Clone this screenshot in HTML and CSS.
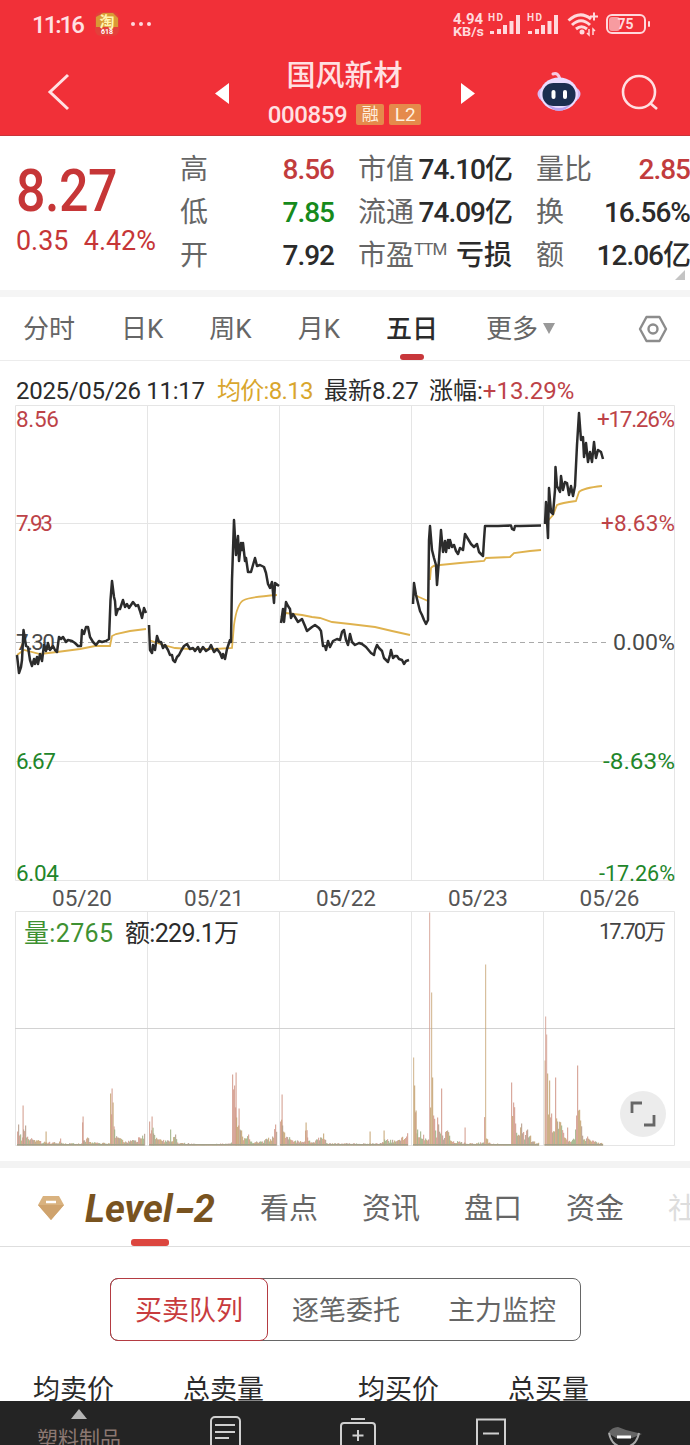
FILE: index.html
```html
<!DOCTYPE html>
<html lang="zh-CN">
<head>
  <meta charset="utf-8">
  <title>国风新材 000859</title>
  <link rel="stylesheet" href="styles.css">
</head>
<body>
  <header class="header">
    <div class="status">
      <span class="status-time">11:16</span>
      <svg class="status-app" width="24" height="24" viewBox="0 0 24 24">
        <rect width="24" height="24" rx="6" fill="#e3403b"/>
        <path d="M1 5L8 1h10l5 5v9H1z" fill="#d99a35"/>
        <text x="12" y="15" font-size="15" font-weight="700" text-anchor="middle" fill="#fff3b0">淘</text>
        <text x="12" y="22" font-size="7" font-weight="700" text-anchor="middle" fill="#fff">618</text>
      </svg>
      <span class="status-dots"><i></i><i></i><i></i></span>
      <svg class="status-icons" width="200" height="30" viewBox="452 9 200 30" fill="#ffd9dc">
        <g font-weight="700">
          <text x="453" y="24" font-size="14" textLength="30" lengthAdjust="spacingAndGlyphs">4.94</text>
          <text x="453" y="36" font-size="13" textLength="31" lengthAdjust="spacingAndGlyphs">KB/s</text>
        </g>
        <text x="488" y="21" font-size="10" textLength="15" font-weight="700">HD</text>
        <text x="527" y="21" font-size="10" textLength="15" font-weight="700">HD</text>
        <path d="M490 31h4v3h-4zM497 29h4v5h-4zM503 25h4v9h-4zM509.500 21h4v13h-4zM516 15h4v19h-4z"/>
        <path d="M528 31h4v3h-4zM535 29h4v5h-4zM541 25h4v9h-4zM547.500 21h4v13h-4zM554 15h4v19h-4z"/>
        <g fill="none" stroke="#ffd9dc" stroke-width="3">
          <path d="M568.500 20.500Q580 10 591 19"/>
          <path d="M572 25Q581 16.500 590 25"/>
          <path d="M576 29Q581.500 24.500 587 29"/>
          <path d="M594 12.500v8M590 16.500h8" stroke-width="2"/>
          <rect x="607" y="15" width="38" height="18" rx="5" stroke-width="2"/>
        </g>
        <circle cx="582" cy="32" r="2.500"/>
        <path d="M589 29v6l-2-2M593 35v-6l2 2" fill="none" stroke="#ffd9dc" stroke-width="1.500"/>
        <rect x="609" y="17" width="11" height="14" rx="3" fill="#f79ba0"/>
        <rect x="648" y="21" width="2" height="6" rx="1"/>
        <text x="617.500" y="29" font-size="14" font-weight="700" textLength="16">75</text>
      </svg>
    </div>
    <div class="title-bar">
      <svg class="back" width="24" height="38" viewBox="0 0 24 38"><path d="M21 2L3 19l18 17" fill="none" stroke="#ffe1e3" stroke-width="3"/></svg>
      <svg class="prev" width="14" height="21" viewBox="0 0 14 21"><path d="M14 0v21L0 10.500z" fill="#fff"/></svg>
      <div class="stock">
        <div class="stock-name">国风新材</div>
        <div class="stock-code"><span>000859</span><b>融</b><b class="l2">L2</b></div>
      </div>
      <svg class="next" width="14" height="21" viewBox="0 0 14 21"><path d="M0 0v21L14 10.500z" fill="#fff"/></svg>
      <svg class="robot" width="44" height="42" viewBox="0 0 44 42">
        <path d="M16 3q5-2 7 5" fill="none" stroke="#f7c9e2" stroke-width="3" stroke-linecap="round"/>
        <ellipse cx="22" cy="23" rx="21.500" ry="11" fill="#d7b9f2"/>
        <ellipse cx="22" cy="23" rx="19" ry="16.500" fill="#eadcff"/>
        <path d="M8 31q14 12 28 0q-7 9-14 9t-14-9z" fill="#b9a2f0"/>
        <rect x="5.500" y="12" width="33" height="23" rx="11" fill="#1c2e50"/>
        <rect x="14.500" y="19" width="4" height="9" rx="2" fill="#fff"/>
        <rect x="26" y="19" width="4" height="9" rx="2" fill="#fff"/>
      </svg>
      <svg class="search" width="38" height="38" viewBox="0 0 38 38" fill="none" stroke="#ffdfe1" stroke-width="2.600"><circle cx="18" cy="18" r="16"/><path d="M29 29l7 6"/></svg>
    </div>
  </header>

  <section class="quote">
    <div class="quote-main">
      <div class="price">8.27</div>
      <div class="change"><span>0.35</span><span>4.42%</span></div>
    </div>
    <dl class="quote-col">
      <div><dt>高</dt><dd class="up">8.56</dd></div>
      <div><dt>低</dt><dd class="down">7.85</dd></div>
      <div><dt>开</dt><dd>7.92</dd></div>
    </dl>
    <dl class="quote-col">
      <div><dt>市值</dt><dd>74.10亿</dd></div>
      <div><dt>流通</dt><dd>74.09亿</dd></div>
      <div><dt>市盈<sup>TTM</sup></dt><dd class="loss">亏损</dd></div>
    </dl>
    <dl class="quote-col">
      <div><dt>量比</dt><dd class="up">2.85</dd></div>
      <div><dt>换</dt><dd>16.56%</dd></div>
      <div><dt>额</dt><dd>12.06亿</dd></div>
    </dl>
    <i class="quote-corner"></i>
  </section>

  <nav class="periods">
    <span>分时</span>
    <span>日K</span>
    <span>周K</span>
    <span>月K</span>
    <span class="active">五日</span>
    <span>更多<i class="caret"></i></span>
    <svg width="30" height="28" viewBox="0 0 30 28" fill="none" stroke="#8c8c8c" stroke-width="2.400" stroke-linejoin="round"><path d="M8.500 2h13L28 14l-6.500 12h-13L2 14z"/><circle cx="15" cy="14" r="4.500"/></svg>
  </nav>

  <section class="chart">
    <div class="legend">
      <span class="legend-time">2025/05/26 11:17</span>
      <span class="legend-avg">均价:8.13</span>
      <span class="legend-last">最新8.27</span>
      <span class="legend-rate">涨幅:<em>+13.29%</em></span>
    </div>
    <svg class="price-chart" width="690" height="477" viewBox="0 405 690 477">
      <path class="grid" d="M15.500 405.500h659v475h-659zM147.500 405v476M279.500 405v476M411.500 405v476M543.500 405v476M15 523.500h659M15 761.500h659"/>
      <path d="M16 642.500h593" fill="none" stroke="#aaa" stroke-dasharray="5 4"/>
      <g class="axis">
        <text class="up" x="16" y="427" textLength="43">8.56</text>
        <text class="up" x="16" y="531" textLength="37">7.93</text>
        <text x="16" y="650" textLength="39">7.30</text>
        <text class="down" x="16" y="769" textLength="40">6.67</text>
        <text class="down" x="16" y="881" textLength="43">6.04</text>
        <text class="up" x="597" y="427" textLength="78">+17.26%</text>
        <text class="up" x="601" y="531" textLength="74">+8.63%</text>
        <text x="613" y="650" textLength="62" lengthAdjust="spacingAndGlyphs">0.00%</text>
        <text class="down" x="603" y="769" textLength="72" lengthAdjust="spacingAndGlyphs">-8.63%</text>
        <text class="down" x="599" y="881" textLength="76" lengthAdjust="spacingAndGlyphs">-17.26%</text>
      </g>
      <g class="avg-line">
        <path d="M17 655L24 650L40 654L57 652L80 649L95 646L110 646L112 636L116 634L130 631L146 629"/>
        <path d="M149 640L160 644L175 648L190 649L215 649L232 648L234 625Q237 603 244 600Q250 597 277 595"/>
        <path d="M281 617L286 613L302 615L312 617L320 618L332 622L350 624L375 627L392 631L410 635"/>
        <path d="M413 594L419 597L428 601M430 580L431 568Q433 565 440 565L460 563L484 561L486 558L510 557L514 553L530 551L541 550"/>
        <path d="M545 524L553 515L557 505Q561 503 576 501L579 492Q583 488 602 486"/>
      </g>
      <g class="price-line">
        <path d="M17 655L19 673L21 667L22 660L23.500 630L26 646L28 647L30 660L32 666L34 659L35 664L37 657L38 664L40 654L42 661L44 645L46 651L48 643L50 650L53 646L55 650L57 652L59 637L61 639L63 637L66 642L68 640L72 641L75 643L78 646L81 646L82 630L84 634L86 627L88 627L90 637L93 642L96 645L99 641L102 642L106 641L109 639L110.500 600L112 581L114 597L115 601L116 615L118 609L120 609L123 600L125 607L127 604L129 608L133 602L136 606L138 605L140 611L142 618L144 608L146 613"/>
        <path d="M149 625L150 650L152 653L153 645L155 650L157 636L159 642L161 642L163 648L165 645L168 650L170 655L172 655L173 660L175 662L177 657L179 655L181 651L184 646L187 644L190 649L193 648L195 651L198 647L200 652L203 647L206 651L209 649L211 645L214 652L217 649L220 653L222 658L223 654L225 659L227 649L230 640L231 642L232 580L234 520L236 555L238 536L239 561L241 543L242 550L243 543L245 561L246 558L248 572L251 572L253 565L255 558L257 566L260 565L264 567L266 573L268 584L270 588L272 582L274 603L275 583L279 586"/>
        <path d="M281 623L283 609L284 622L286 602L288 606L290 609L291 618L293 614L295 617L298 622L302 619L305 626L307 631L312 627L315 625L319 628L321 631L323 646L325 646L326 650L328 641L330 647L331 645L333 641L337 639L340 640L342 632L344 630L346 640L348 645L350 634L352 642L355 645L359 643L362 644L366 647L371 653L374 655L375 650L377 645L379 648L382 651L384 658L386 660L388 662L390 655L391 650L393 658L395 656L397 656L399 659L402 660L404 664L406 661L409 660"/>
        <path d="M413 604L414 583L416 595L418 603L420 611L422 615L424 620L426 624L428 620L429 540L430 526L432 550L434 558L436 565L437 585L439 560L441 530L443 552L445 541L446 552L448 540L449 548L450 540L452 547L454 545L456 551L458 554L460 548L463 550L465 534L468 539L471 544L474 547L477 544L479 552L483 556L484 540L485 526L498 526L511 525.500L512 529L514 530L515 526L520 526L541 525.500"/>
        <path d="M545 524L546 502L548 538L549 488L551 512L553 514L555 490L555.500 467L557 486L560 492L561 476L563 490L565 482L567 483L569 495L571 486L573 496L575 486L577 445L579 413L581 440L583 437L584 457L586 443L588 462L590 452L592 462L594 442L595 451L596 458L598 450L601 452L603 459"/>
      </g>
    </svg>
    <div class="dates"><span>05/20</span><span>05/21</span><span>05/22</span><span>05/23</span><span>05/26</span></div>
    <div class="volume">
      <svg width="690" height="236" viewBox="0 911 690 236">
        <path class="grid" d="M15.500 911.500h659v234h-659zM147.500 911v235M279.500 911v235M411.500 911v235M543.500 911v235"/>
        <path d="M15 1028.500h660" stroke="#d2d2d2"/>
        <g id="volume-bars"></g>
        <text class="volume-qty" x="24" y="942" textLength="89">量:2765</text>
        <text class="volume-amt" x="125" y="942" textLength="114">额:229.1万</text>
        <text class="volume-max" x="599" y="939" textLength="67">17.70万</text>
      </svg>
      <button class="expand"><svg width="26" height="26" viewBox="0 0 26 26" fill="none" stroke="#666" stroke-width="2.800"><path d="M2 12V2h10M24 14v10H14"/></svg></button>
    </div>
  </section>

  <nav class="sections">
    <svg width="26" height="24" viewBox="0 0 26 24"><path d="M5 0h16l5 9-13 15L0 9z" fill="#d9b27f"/><path d="M0 9h26L13 24z" fill="#cfa36d"/><path d="M8 6h10" stroke="#fff" stroke-width="2.500"/></svg>
    <span class="level">Level<b>-</b>2</span>
    <span>看点</span>
    <span>资讯</span>
    <span>盘口</span>
    <span>资金</span>
    <span class="faded">社</span>
  </nav>

  <div class="segments">
    <span class="active">买卖队列</span>
    <span>逐笔委托</span>
    <span>主力监控</span>
  </div>

  <div class="columns"><span>均卖价</span><span>总卖量</span><span>均买价</span><span>总买量</span></div>

  <footer class="toolbar">
    <div class="sector"><i></i><span>塑料制品</span></div>
    <svg width="134" height="44" viewBox="158 1401 134 44" fill="none" stroke="#d0d0d0" stroke-width="2"><rect x="211" y="1417" width="29" height="34" rx="4"/><path d="M215 1425h20M215 1432h20M215 1438h14"/></svg>
    <svg width="133" height="44" viewBox="292 1401 133 44" fill="none" stroke="#d0d0d0" stroke-width="2"><path d="M351 1419h14M358 1430v11M352.500 1435.500h11"/><rect x="341" y="1423" width="34" height="30" rx="3"/></svg>
    <svg width="133" height="44" viewBox="425 1401 133 44" fill="none" stroke="#d0d0d0" stroke-width="2"><path d="M477 1460v-40.500h28V1460M483 1433.500h16"/></svg>
    <svg width="132" height="44" viewBox="558 1401 132 44">
      <path d="M608 1433q4-6 10-6l8 3 16 4-10 4h-16z" fill="#666"/>
      <path d="M609 1433q3 14 15 14t15-14" fill="none" stroke="#aaa" stroke-width="2"/>
      <path d="M617 1437h14" stroke="#fff" stroke-width="3"/>
    </svg>
  </footer>

  <script>
    // [x, height] outline of the volume for each trading day
    const days = [
      [[17, 14], [18, 21], [19, 10], [22, 8], [22.5, 40], [23, 16], [25, 20], [26, 8], [32, 6], [45, 3], [45.5, 14], [46, 3], [59, 4], [60, 7], [62, 2], [81, 2], [82.5, 29], [83, 5], [87, 8], [92, 3], [109, 2], [110, 52], [111.5, 57], [112.5, 43], [114, 16], [117, 8], [125, 4], [135, 5], [144.5, 11]],
      [[149, 24], [150, 12], [151.5, 29], [153, 12], [158, 6], [169, 4], [170, 16], [171, 4], [175, 11], [177, 3], [200, 1], [230, 2], [231, 3], [232, 71], [234, 60], [235.5, 73], [236, 28], [238, 20], [238.5, 37], [240, 15], [245, 7], [248, 11], [250, 4], [262, 4], [272, 9], [275, 21], [276.500, 11]],
      [[280, 24], [281.5, 51], [282, 20], [284, 13], [290, 6], [304, 4], [305.5, 23], [307, 8], [310, 3], [323, 12], [327, 2], [369, 2], [369.5, 14], [370, 2], [383, 3], [383.5, 15], [384, 6], [397, 5], [408, 11]],
      [[413, 88], [414, 60], [415.5, 35], [417, 16], [425, 7], [428, 6], [429, 233], [430, 38], [431, 153], [432, 68], [433, 30], [436, 8], [437, 28], [440, 12], [441, 57], [442, 10], [447, 15], [450, 5], [464, 3], [464.5, 18], [465, 2], [483, 3], [485, 181], [486, 7], [490, 2], [510, 1], [511, 63], [513, 43], [515, 22], [519, 10], [521, 22], [524, 6], [527, 16], [532, 4], [539, 2]],
      [[544.5, 85], [545, 129], [546, 111], [547, 72], [549, 65], [551, 32], [554, 14], [555, 68], [557, 24], [561, 20], [566, 6], [567, 18], [568, 4], [574, 6], [576, 30], [577, 80], [578, 35], [580, 25], [583, 6], [587, 9], [592, 5], [603, 2]]
    ]
    const colors = ['#d29a8c', '#c6a474', '#9fb185', '#b59b8a']
    let seed = 859
    const random = () => {
      seed = (seed * 16807) % 2147483647
      return seed / 2147483647
    }

    let bars = ''
    days.forEach((points) => {
      for (let i = 0; i < points.length - 1; i++) {
        const [x1, h1] = points[i]
        const [x2, h2] = points[i + 1]
        for (let x = x1; x < x2; x++) {
          const base = h1 + (h2 - h1) * (x - x1) / (x2 - x1)
          const h = x === x1 ? h1 : Math.max(1, Math.min(base, 50) * (0.5 + random() * 0.7))
          const color = colors[Math.floor(random() * (h > 25 ? 1.6 : 4))]
          bars += `<rect x="${x}" y="${(1145.5 - h).toFixed(1)}" width="1.2" height="${h.toFixed(1)}" fill="${color}" opacity="${h > 80 ? 0.7 : 0.85}"/>`
        }
      }
      bars += `<rect x="${points[0][0]}" y="1144" width="${points[points.length - 1][0] - points[0][0]}" height="1.5" fill="#a3a08a"/>`
    })
    document.getElementById('volume-bars').innerHTML = bars
  </script>
</body>
</html>
```
FILE: styles.css
```css
* {
  box-sizing: border-box;
}

body {
  margin: 0;
  width: 690px;
  height: 1445px;
  overflow: hidden;
  background: #fff;
  color: #2b2b2b;
  font-family: Roboto, "Noto Sans CJK SC", sans-serif;
  white-space: nowrap;
}

svg {
  display: block;
  flex: none;
}

i, em {
  font-style: normal;
}

.up {
  color: #c23c3d;
  fill: #bd4348;
}

.down {
  color: #168a1c;
  fill: #22862a;
}

.header {
  height: 136px;
  background: #f13038;
  border-bottom: 1px solid #c9343a;
  color: #ffe0e2;
}

.status {
  display: flex;
  align-items: center;
  height: 48px;
  padding-left: 32px;
}

.status-time {
  width: 63px;
  padding-top: 1px;
  font-size: 24px;
  font-weight: 500;
  letter-spacing: -2px;
}

.status-dots {
  display: flex;
  gap: 4px;
  margin-left: 12px;
  width: 309px;
}

.status-dots i {
  width: 4px;
  height: 4px;
  border-radius: 50%;
  background: #ffd9dc;
}

.status-icons {
  margin-left: 12px;
}

.title-bar {
  display: flex;
  align-items: center;
  height: 87px;
  padding-left: 47px;
}

.prev {
  margin: 3px 0 0 144px;
}

.stock {
  flex: none;
  width: 229px;
  padding-left: 2px;
  text-align: center;
}

.stock-name {
  margin-top: 8px;
  line-height: 38px;
  font-size: 29px;
  font-weight: 500;
}

.stock-code {
  display: flex;
  align-items: center;
  justify-content: center;
  gap: 5px;
  height: 40px;
  padding-bottom: 1px;
  font-size: 24px;
  font-weight: 500;
}

.stock-code span {
  margin: 1px 4px 0 0;
  letter-spacing: -0.4px;
}

.stock-code b {
  width: 28px;
  height: 21px;
  border-radius: 2px;
  background: #e58a4b;
  color: #fff0df;
  font-size: 17px;
  font-weight: 400;
  line-height: 21px;
}

.stock-code .l2 {
  width: 32px;
  font-size: 19px;
}

.next {
  margin: 3px 0 0 3px;
}

.robot {
  margin: 0 40px 0 62px;
}

.search {
  margin-top: 3px;
}

.quote {
  position: relative;
  display: flex;
  height: 154px;
  padding-top: 12px;
}

.quote-main {
  flex: none;
  width: 180px;
  padding: 14px 0 0 16px;
  color: #c63637;
}

.price {
  height: 56px;
  font-size: 59px;
  font-weight: 500;
  line-height: 58px;
  letter-spacing: -0.5px;
  transform: scaleX(0.88);
  transform-origin: left;
}

.change {
  display: flex;
  gap: 16px;
  font-size: 28px;
  line-height: 46px;
  transform: scaleX(0.96);
  transform-origin: left;
}

.quote-col {
  flex: none;
  margin: 0 24px 0 0;
  width: 154px;
}

.quote-col:last-of-type {
  margin-right: 0;
}

.quote-col div {
  display: flex;
  justify-content: space-between;
  height: 43px;
  line-height: 43px;
}

.quote-col dt {
  color: #666;
  font-size: 28px;
}

.quote-col dd {
  margin: 0;
  font-size: 28px;
  font-weight: 500;
  letter-spacing: -1px;
}

.quote-col .loss {
  font-size: 28px;
  letter-spacing: 0;
}

.quote-col sup {
  font-size: 17px;
  line-height: 0;
  letter-spacing: -1px;
}

.quote-corner {
  position: absolute;
  right: 5px;
  bottom: 10px;
  border-style: solid;
  border-width: 0 0 10px 10px;
  border-color: transparent transparent #c4c4c4;
}

.periods {
  display: flex;
  align-items: center;
  height: 71px;
  padding-left: 23px;
  border-top: 7px solid #f5f5f5;
  border-bottom: 1px solid #ececec;
  color: #666;
  font-size: 26px;
}

.periods span {
  position: relative;
  height: 63px;
  margin-right: 46px;
  line-height: 65px;
}

.periods .active {
  margin-right: 48px;
  color: #2b2b2b;
  font-weight: 500;
}

.periods .active::after,
.level::after {
  content: "";
  position: absolute;
  left: 50%;
  bottom: 0;
  width: 24px;
  height: 6px;
  margin-left: -12px;
  border-radius: 3px;
  background: #c8373b;
}

.caret {
  display: inline-block;
  margin: 0 0 4px 5px;
  border: 6px solid transparent;
  border-top: 11px solid #999;
  border-bottom: 0;
}

.periods svg {
  margin: 0 22px 0 auto;
}

.legend {
  display: flex;
  height: 44px;
  padding: 14px 0 0 16px;
  font-size: 24px;
  line-height: 32px;
}

.legend-time {
  width: 201px;
  letter-spacing: -0.3px;
}

.legend-avg {
  width: 107px;
  color: #d9a62e;
  letter-spacing: -0.7px;
}

.legend-last {
  width: 105px;
}

.legend em {
  color: #bd4348;
}

.grid {
  fill: none;
  stroke: #e5e5e5;
}

.axis {
  font-size: 22.5px;
  fill: #4a4a4a;
}

.avg-line {
  fill: none;
  stroke: #dfb24e;
  stroke-width: 1.8;
}

.price-line {
  fill: none;
  stroke: #2c2c2c;
  stroke-width: 2.5;
  stroke-linejoin: round;
}

.dates {
  display: flex;
  height: 29px;
  padding-left: 16px;
  color: #555;
  font-size: 22.5px;
  line-height: 33px;
}

.dates span {
  width: 132px;
  text-align: center;
}

.dates span:last-child {
  width: 131px;
}

.volume {
  position: relative;
  height: 250px;
}

.volume-qty {
  font-size: 25px;
  fill: #3f9132;
}

.volume-amt {
  font-size: 25px;
  fill: #2b2b2b;
}

.volume-max {
  font-size: 22px;
  fill: #444;
}

.expand {
  position: absolute;
  left: 620px;
  top: 180px;
  display: flex;
  align-items: center;
  justify-content: center;
  width: 46px;
  height: 46px;
  padding: 0;
  border: 0;
  border-radius: 50%;
  background: #ececec;
}

.sections {
  display: flex;
  align-items: center;
  height: 86px;
  padding-left: 38px;
  border-top: 7px solid #f3f3f3;
  border-bottom: 1px solid #dedede;
  color: #666;
  font-size: 29px;
  overflow: hidden;
}

.sections svg {
  margin-top: 2px;
}

.sections span {
  flex: none;
  height: 78px;
  margin-right: 44px;
  line-height: 82px;
}

.sections .level {
  position: relative;
  width: 131px;
  margin: 0 44px 0 21px;
  color: #79531f;
  font-size: 38px;
  font-style: italic;
  font-weight: 700;
}

.level b {
  display: inline-block;
  width: 21px;
  transform: scaleX(1.45);
  transform-origin: left;
}

.sections .level::after {
  width: 38px;
  height: 7px;
  margin-left: -20px;
  background: #dc463f;
}

.sections .faded {
  margin: 0;
  color: #ddd;
}

.segments {
  display: flex;
  width: 471px;
  height: 63px;
  margin: 31px 0 0 110px;
  border: 1px solid #666;
  border-radius: 8px;
  color: #666;
  font-size: 27px;
  line-height: 64px;
  text-align: center;
}

.segments span {
  flex: 1;
}

.segments .active {
  margin: -1px 0 -1px -1px;
  border: 1px solid #b43b42;
  border-radius: 8px;
  color: #c83c3e;
}

.columns {
  display: flex;
  height: 60px;
  padding: 33px 0 0 33px;
  font-size: 27px;
  line-height: 32px;
  overflow: hidden;
}

.columns span {
  width: 150px;
}

.columns span:nth-child(2) {
  width: 175px;
}

.toolbar {
  display: flex;
  height: 44px;
  background: #242424;
  overflow: hidden;
}

.sector {
  display: flex;
  flex-direction: column;
  align-items: center;
  width: 158px;
  padding-top: 8px;
  color: #8c7872;
  font-size: 21px;
  line-height: 40px;
}

.sector i {
  flex: none;
  border: 8px solid transparent;
  border-top: 0;
  border-bottom: 10px solid #b5b5b5;
}
```
